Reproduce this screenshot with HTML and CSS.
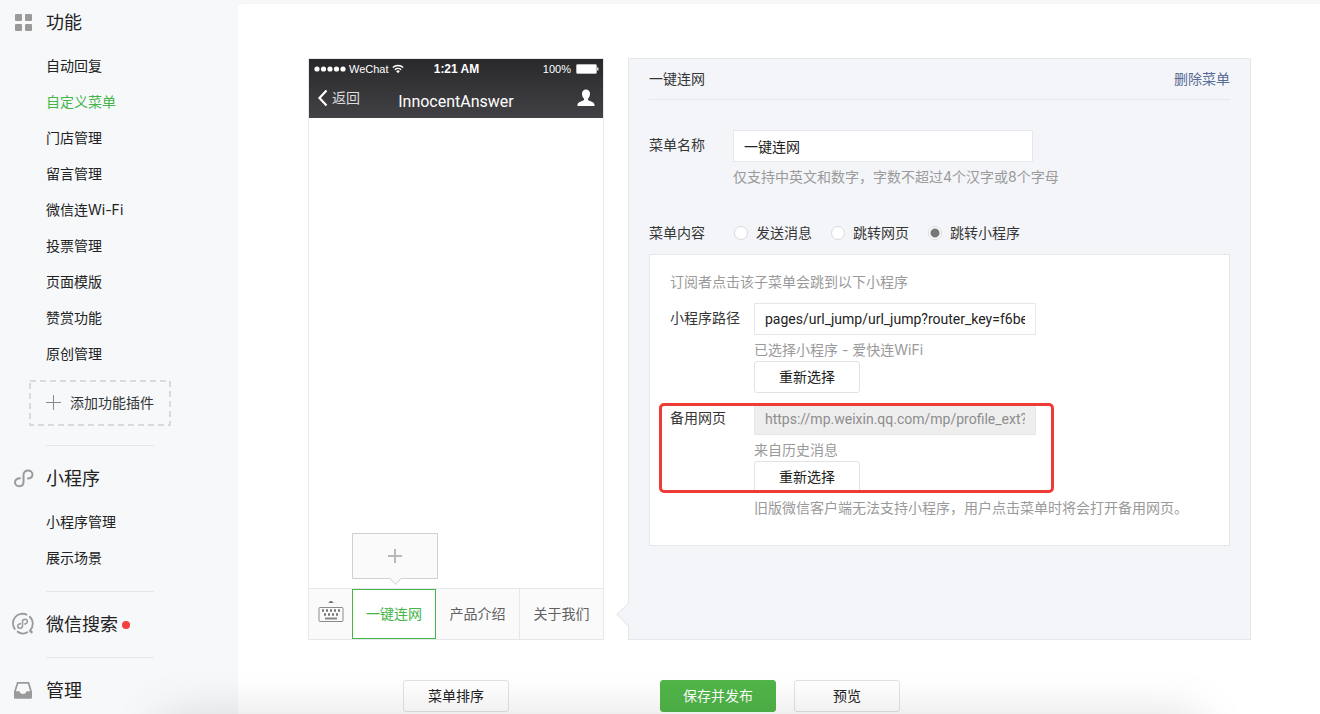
FILE: index.html
```html
<!DOCTYPE html>
<html lang="zh-CN">
<head>
<meta charset="utf-8">
<title>自定义菜单</title>
<link rel="stylesheet" href="styles.css">
</head>
<body>
<div class="page">
  <nav class="sidebar">
    <h2 class="nav-title">
      <svg class="nav-icon" viewBox="0 0 24 24"><g fill="#9a9a9a"><rect x="4" y="4" width="7" height="7" rx="1"/><rect x="14" y="4" width="7" height="7" rx="1"/><rect x="4" y="14" width="7" height="7" rx="1"/><rect x="14" y="14" width="7" height="7" rx="1"/></g></svg>
      <span>功能</span>
    </h2>
    <ul class="nav-list">
      <li><a href="#">自动回复</a></li>
      <li><a href="#" class="active">自定义菜单</a></li>
      <li><a href="#">门店管理</a></li>
      <li><a href="#">留言管理</a></li>
      <li><a href="#">微信连Wi-Fi</a></li>
      <li><a href="#">投票管理</a></li>
      <li><a href="#">页面模版</a></li>
      <li><a href="#">赞赏功能</a></li>
      <li><a href="#">原创管理</a></li>
    </ul>
    <button class="add-plugin" type="button">
      <svg width="142" height="46" class="dash"><rect x="1" y="1" width="140" height="44" fill="none" stroke="#d9dadc" stroke-width="2" stroke-dasharray="6 4"/></svg>
      <svg width="16" height="16" viewBox="0 0 16 16"><path d="M0 7.500h15M7.500 0v15" stroke="#8a8a8a" fill="none"/></svg>
      <span>添加功能插件</span>
    </button>
    <hr class="rule">
    <h2 class="nav-title">
      <svg class="nav-icon" viewBox="0 0 24 24"><path d="M9.800 12.200C6.500 11.900 4 13.500 4 16.200c0 2.300 1.900 4.100 4.200 4.100 2.600 0 4.300-1.700 4.300-4.200V8.600c0-2.400 1.900-4.100 4.500-4.100 2.500 0 4.500 1.700 4.500 4.100 0 2.600-2.400 4.200-5.300 3.900" fill="none" stroke="#9a9a9a" stroke-width="2"/></svg>
      <span>小程序</span>
    </h2>
    <ul class="nav-list">
      <li><a href="#">小程序管理</a></li>
      <li><a href="#">展示场景</a></li>
    </ul>
    <hr class="rule">
    <h2 class="nav-title">
      <svg class="nav-icon" viewBox="0 0 24 24"><g fill="none" stroke="#9a9a9a"><path d="M4.200 17.600A9.600 9.600 0 0 1 16.200 3M18.200 4.200A9.600 9.600 0 0 1 19.200 18.200M17 20A9.600 9.600 0 0 1 6 19.300" stroke-width="1.800"/><path d="M18.500 18 21.300 20.800" stroke-width="2.400"/><path d="M10 11.800c-2-.2-3.300.8-3.300 2.300 0 1.300 1 2.200 2.400 2.200 1.500 0 2.400-.9 2.400-2.300V9.600c0-1.400 1.100-2.300 2.500-2.300s2.400.9 2.400 2.300c0 1.500-1.400 2.500-3.200 2.300" stroke-width="1.500"/></g></svg>
      <span>微信搜索</span><i class="dot"></i>
    </h2>
    <hr class="rule">
    <h2 class="nav-title">
      <svg class="nav-icon" viewBox="0 0 24 24"><path fill="#9a9a9a" fill-rule="evenodd" d="M6 4h12.200l2.800 9.500v6a1.300 1.300 0 0 1-1.300 1.300H4.300A1.300 1.300 0 0 1 3 19.500v-6zM7.300 5.700 4.900 13.200h3.700c.3 1.800 1.600 2.800 3.400 2.800s3.100-1 3.400-2.800h3.700L16.900 5.700z"/></svg>
      <span>管理</span>
    </h2>
  </nav>

  <main class="main">
    <div class="editor">
      <section class="phone">
        <header class="phone-head">
          <div class="status">
            <span class="carrier">
              <svg width="32" height="8" viewBox="0 0 32 8"><g fill="#fff"><circle cx="3" cy="4" r="2.600"/><circle cx="9.500" cy="4" r="2.600"/><circle cx="16" cy="4" r="2.600"/><circle cx="22.500" cy="4" r="2.600"/><circle cx="29" cy="4" r="2.600"/></g></svg>
              <span>WeChat</span>
              <svg width="12" height="10" viewBox="0 0 12 10"><g fill="none" stroke="#fff" stroke-width="1.400"><path d="M.8 3.600a7.500 7.500 0 0 1 10.400 0M2.800 5.800a4.600 4.600 0 0 1 6.400 0"/></g><path d="M4.200 7.200a2.600 2.600 0 0 1 3.600 0L6 9.200z" fill="#fff"/></svg>
            </span>
            <b>1:21 AM</b>
            <span class="power">100%
              <svg width="23" height="10" viewBox="0 0 23 10"><rect x=".5" y=".5" width="20" height="9" rx="1" fill="#fff" stroke="#bbb"/><path d="M21 3.500h1.500v3H21z" fill="#ddd"/></svg>
            </span>
          </div>
          <div class="title-bar">
            <span class="back"><svg width="12" height="18" viewBox="0 0 12 18"><path d="M9.500 1.500 2.500 9l7 7.500" fill="none" stroke="#fff" stroke-width="2.200"/></svg>返回</span>
            <span class="account">InnocentAnswer</span>
            <svg class="person" width="18" height="18" viewBox="0 0 18 18"><path fill="#fff" d="M9 .5c2.500 0 4 1.900 4 4.300 0 2.200-.9 4-2 5v1.300c1.200 1.300 6.500 1.600 6.500 5v.9H.5v-.9c0-3.400 5.300-3.700 6.500-5V9.800c-1.100-1-2-2.800-2-5C5 2.400 6.500.5 9 .5z"/></svg>
          </div>
        </header>
        <div class="phone-body"></div>
        <footer class="phone-menu">
          <span class="keyboard">
            <svg width="26" height="24" viewBox="0 0 26 24"><path d="M10.500 3c.6-1.400 1.500-2 2.500-2s1.900.6 2.500 2z" fill="#777"/><rect x="1" y="7.500" width="24" height="14" rx="1" fill="none" stroke="#8a8a8a"/><path d="M4 10.500h18" stroke="#777" stroke-width="2.400" stroke-dasharray="2 2"/><path d="M6 14.500h15" stroke="#777" stroke-width="2.400" stroke-dasharray="2 2"/><path d="M7 18.500h12" stroke="#888" stroke-width="2"/></svg>
          </span>
          <div class="tab-cell current-cell">
            <button class="tab current" type="button">一键连网</button>
            <button class="submenu-add" type="button" aria-label="添加子菜单"><svg width="14" height="14" viewBox="0 0 14 14"><path d="M0 7h14M7 0v14" stroke="#b8b8b8" stroke-width="2"/></svg></button>
          </div>
          <div class="tab-cell"><button class="tab" type="button">产品介绍</button></div>
          <div class="tab-cell divided"><button class="tab" type="button">关于我们</button></div>
        </footer>
      </section>

      <section class="panel">
        <header class="panel-head"><span>一键连网</span><a href="#">删除菜单</a></header>
        <div class="field">
          <label for="menu-name">菜单名称</label>
          <div class="field-body">
            <input id="menu-name" class="text name" type="text" value="一键连网">
            <p class="hint">仅支持中英文和数字，字数不超过4个汉字或8个字母</p>
          </div>
        </div>
        <div class="choice">
          <span class="choice-label">菜单内容</span>
          <label><input type="radio" name="kind">发送消息</label>
          <label><input type="radio" name="kind">跳转网页</label>
          <label><input type="radio" name="kind" checked>跳转小程序</label>
        </div>
        <div class="target">
          <p class="intro">订阅者点击该子菜单会跳到以下小程序</p>
          <div class="field">
            <label for="path">小程序路径</label>
            <div class="field-body">
              <input id="path" class="text" type="text" value="pages/url_jump/url_jump?router_key=f6be">
              <p class="hint">已选择小程序 - 爱快连WiFi</p>
              <button class="btn" type="button">重新选择</button>
            </div>
          </div>
          <div class="field">
            <label for="backup">备用网页</label>
            <div class="field-body">
              <input id="backup" class="text" type="text" value="https://mp.weixin.qq.com/mp/profile_ext?action=home" disabled>
              <p class="hint">来自历史消息</p>
              <button class="btn" type="button">重新选择</button>
              <p class="hint">旧版微信客户端无法支持小程序，用户点击菜单时将会打开备用网页。</p>
            </div>
            <div class="marker"></div>
          </div>
        </div>
      </section>
    </div>

    <div class="actions">
      <div class="actions-left"><button class="btn" type="button">菜单排序</button></div>
      <div class="actions-right">
        <button class="btn primary" type="button">保存并发布</button>
        <button class="btn" type="button">预览</button>
      </div>
    </div>
  </main>
</div>
<div class="bottom-shade"></div>
</body>
</html>
```

FILE: styles.css
```css
* { box-sizing: border-box; }

body {
  margin: 0;
  background: #f6f8fa;
  color: #353535;
  font: 14px/22px Inter, "Noto Sans CJK SC", sans-serif;
}

p, h2, ul { margin: 0; padding: 0; font-weight: 400; }
a { text-decoration: none; }
button, input { font: inherit; color: inherit; }
svg { display: block; flex: none; }

.page { display: flex; min-height: 100vh; }

.sidebar { flex: none; width: 238px; padding: 4px 0 4px 46px; color: #222; }
.nav-title { display: flex; align-items: center; height: 36px; margin-left: -35px; font-size: 18px; }
.nav-title span { padding-top: 2px; }
.nav-icon { width: 24px; height: 24px; margin-right: 11px; }
.dot { width: 8px; height: 8px; margin: 2px 0 0 4px; border-radius: 50%; background: #f43f3f; }
.nav-list { margin-top: 8px; list-style: none; }
.nav-list a { display: block; color: #222; line-height: 36px; }
.nav-list a.active { color: #44b549; }
.rule { width: 108px; height: 1px; margin: 15px 0 14px; border: 0; background: #e4e6e9; }

.add-plugin {
  position: relative;
  display: flex;
  align-items: center;
  gap: 8px;
  width: 142px;
  height: 46px;
  margin: 8px 0 19px -17px;
  padding: 0 0 0 17px;
  border: 0;
  background: none;
  color: #353535;
}
.add-plugin .dash { position: absolute; inset: 0; }

.main {
  flex: 1;
  min-width: 0;
  margin-top: 4px;
  padding: 54px 69px 2px 70px;
  border-top-left-radius: 4px;
  background: #fff;
  box-shadow: 0 0 2px rgba(0, 0, 0, .06);
}
.editor { display: flex; gap: 24px; }

.phone {
  display: flex;
  flex: none;
  flex-direction: column;
  width: 296px;
  min-height: 582px;
  border: 1px solid #e7e7eb;
  background: #fff;
}
.phone-head {
  height: 59px;
  background: linear-gradient(#29292b, #424246);
  color: #fff;
}
.status {
  display: grid;
  grid-template-columns: 1fr auto 1fr;
  align-items: center;
  height: 20px;
  padding: 0 4px 0 5px;
  font: 11px/20px "Liberation Sans", sans-serif;
}
.status b { font-size: 12px; }
.carrier, .power { display: flex; align-items: center; gap: 3px; }
.power { justify-content: flex-end; gap: 5px; }
.title-bar {
  display: grid;
  grid-template-columns: 1fr auto 1fr;
  align-items: center;
  height: 38px;
  padding: 0 8px;
}
.back { display: flex; align-items: center; gap: 3px; color: #ddd; }
.account { padding-top: 8px; font: 16px/22px Roboto, sans-serif; }
.person { justify-self: end; }
.phone-body { flex: 1; }

.phone-menu { display: flex; height: 51px; border-top: 1px solid #e7e7eb; background: #fafafa; }
.keyboard { display: flex; flex: none; align-items: center; justify-content: center; width: 43px; padding-bottom: 4px; }
.tab-cell { position: relative; flex: 1; min-width: 0; }
.current-cell { flex: 0 0 84px; }
.divided { border-left: 1px solid #e7e7eb; }
.tab { width: 100%; height: 50px; padding: 0; border: 0; background: none; color: #616161; }
.tab.current { border: 1px solid #44b549; background: #fff; color: #44b549; }
.submenu-add {
  position: absolute;
  bottom: 60px;
  left: 0;
  display: flex;
  align-items: center;
  justify-content: center;
  width: 86px;
  height: 46px;
  padding: 0;
  border: 1px solid #d0d0d0;
  background: #fafafa;
}
.submenu-add::after {
  content: "";
  position: absolute;
  bottom: -5px;
  left: 38px;
  width: 8px;
  height: 8px;
  border: solid #d8d8d8;
  border-width: 0 1px 1px 0;
  background: #fafafa;
  transform: rotate(45deg);
}

.panel {
  position: relative;
  flex: 1;
  min-width: 0;
  padding: 0 20px 20px;
  border: 1px solid #e7e7eb;
  background: #f4f5f9;
}
.panel::before {
  content: "";
  position: absolute;
  bottom: 16px;
  left: -9px;
  width: 16px;
  height: 16px;
  border: solid #e7e7eb;
  border-width: 0 0 1px 1px;
  background: #f4f5f9;
  transform: rotate(45deg);
}
.panel-head {
  display: flex;
  align-items: center;
  justify-content: space-between;
  height: 41px;
  margin-bottom: 30px;
  border-bottom: 1px solid #e7e7eb;
}
.panel-head a { color: #576b95; }

.field { position: relative; display: flex; }
.field > label { flex: none; width: 84px; line-height: 30px; }
.field-body { flex: 1; min-width: 0; }
.text {
  display: block;
  width: 282px;
  height: 32px;
  padding: 0 10px;
  border: 1px solid #e7e7eb;
  border-radius: 0;
  background: #fff;
  color: #222;
  font-family: Roboto, "Noto Sans CJK SC", sans-serif;
}
.text.name { width: 300px; }
.text:disabled { background: #eee; color: #8d8d8d; }
.hint { padding-top: 4px; color: #9a9a9a; }

.choice { display: flex; align-items: center; gap: 19px; height: 20px; margin: 35px 0 11px; }
.choice-label { width: 66px; }
.choice label { display: flex; align-items: center; gap: 8px; }
.choice input {
  width: 14px;
  height: 14px;
  margin: 0;
  border: 1px solid #d9dadc;
  border-radius: 50%;
  appearance: none;
  background: #fff;
}
.choice input:checked { background: radial-gradient(circle, #777 0 4px, #fff 5px); }

.target { padding: 16px 20px 26px; border: 1px solid #e7e7eb; background: #fff; }
.target .field { margin-top: 10px; }
.intro { color: #9a9a9a; }
.marker {
  position: absolute;
  top: 0;
  left: -11px;
  width: 395px;
  height: 90px;
  border: 3px solid #ee3b35;
  border-radius: 5px;
  pointer-events: none;
}

.btn {
  display: block;
  min-width: 106px;
  height: 32px;
  padding: 0 22px;
  border: 1px solid #e2e2e4;
  border-radius: 3px;
  background: #fff;
  color: #222;
}
.btn.primary { min-width: 116px; border-color: #50b548; background: #50b548; color: #fff; }

.actions { display: flex; gap: 24px; margin-top: 40px; }
.actions-left { display: flex; flex: none; justify-content: center; width: 296px; }
.actions-right { display: flex; gap: 18px; padding-left: 32px; }

.bottom-shade {
  position: fixed;
  bottom: -64px;
  left: 160px;
  right: 120px;
  height: 60px;
  box-shadow: 0 0 50px rgba(0, 0, 0, .15);
  pointer-events: none;
}
```
